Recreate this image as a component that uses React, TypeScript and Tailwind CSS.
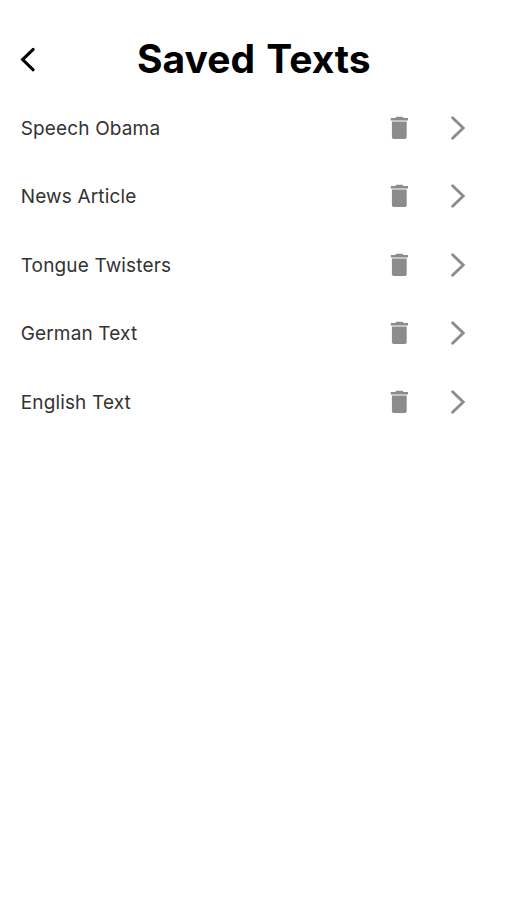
const savedTexts = [
  "Speech Obama",
  "News Article",
  "Tongue Twisters",
  "German Text",
  "English Text",
];

function BackIcon() {
  return (
    <svg
      viewBox="0 0 16 26"
      className="h-[26px] w-4"
      fill="none"
      stroke="currentColor"
      strokeWidth="3"
      strokeLinecap="round"
    >
      <path d="M13.2 3.4 2.6 13.6l10.6 10.2" />
    </svg>
  );
}

function TrashIcon() {
  return (
    <svg viewBox="0 0 18 24" className="h-6 w-[18px]" fill="currentColor">
      <path d="M1.9 20.9c0 1.3 1 2.2 2.3 2.2h10.2c1.3 0 2.3-.9 2.3-2.2V5.4H1.9v15.5ZM18 1.9h-4.4L12.4.8H6.4L5.2 1.9H.8v2.7H18V1.9Z" />
    </svg>
  );
}

function ChevronIcon() {
  return (
    <svg
      viewBox="0 0 16 26"
      className="h-[26px] w-4"
      fill="none"
      stroke="currentColor"
      strokeWidth="2.9"
      strokeLinecap="round"
    >
      <path d="M2.6 2.8 13.2 13 2.6 23.2" />
    </svg>
  );
}

function SavedTextRow({ title }: { title: string }) {
  return (
    <li className="flex h-[68.4px] items-center pr-[41px] pl-[20.7px] text-[#8c8c8c]">
      <span className="flex-1 pt-[2.5px] text-[19px] tracking-[0.15px] text-[#333]">{title}</span>
      <button type="button" aria-label={`Delete ${title}`} className="mr-[42px]">
        <TrashIcon />
      </button>
      <button type="button" aria-label={`Open ${title}`}>
        <ChevronIcon />
      </button>
    </li>
  );
}

export default function App() {
  return (
    <main className="min-h-screen bg-white font-['Inter',sans-serif]">
      <header className="grid h-[93.8px] grid-cols-[137px_1fr] items-center pt-[25px] text-black">
        <button type="button" aria-label="Back" className="pl-5">
          <BackIcon />
        </button>
        <h1 className="pb-0.5 text-[39px] leading-none font-bold whitespace-nowrap [word-spacing:2px]">
          Saved Texts
        </h1>
      </header>
      <ul>
        {savedTexts.map((title) => (
          <SavedTextRow key={title} title={title} />
        ))}
      </ul>
    </main>
  );
}
